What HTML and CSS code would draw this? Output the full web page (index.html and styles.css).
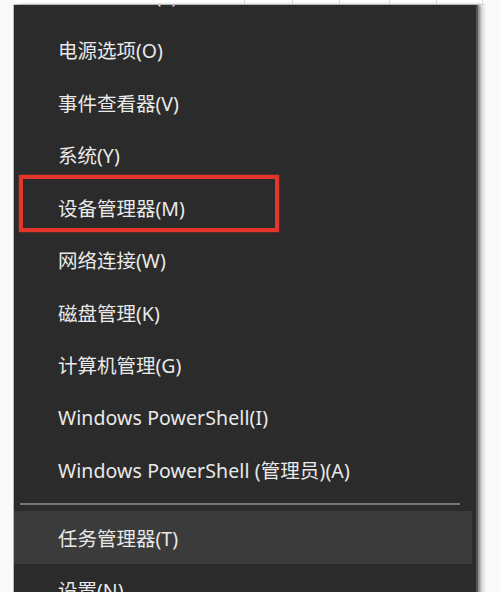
FILE: index.html
```html
<!DOCTYPE html>
<html lang="zh-CN">
<head>
    <meta charset="UTF-8">
    <meta name="viewport" content="width=device-width, initial-scale=1.0">
    <title>Win+X 菜单</title>
    <link rel="stylesheet" href="styles.css">
</head>
<body>

<div class="screen">
    <div class="topbar">
        <div class="cell wide"></div>
        <div class="cell" style="width: 48px"></div>
        <div class="cell" style="width: 47px"></div>
        <div class="cell" style="width: 50px"></div>
        <div class="cell" style="width: 47px"></div>
        <div class="cell" style="width: 46px"></div>
    </div>

    <div class="menu">
        <ul class="menuList">
            <li class="menuItem clipped">应用和功能(F)</li>
            <li class="menuItem">电源选项(O)</li>
            <li class="menuItem">事件查看器(V)</li>
            <li class="menuItem">系统(Y)</li>
            <li class="menuItem marked">设备管理器(M)<span class="redBox"></span></li>
            <li class="menuItem">网络连接(W)</li>
            <li class="menuItem">磁盘管理(K)</li>
            <li class="menuItem">计算机管理(G)</li>
            <li class="menuItem latin">Windows PowerShell(I)</li>
            <li class="menuItem latin">Windows PowerShell (管理员)(A)</li>
            <li class="separator"><hr></li>
            <li class="menuItem active">任务管理器(T)</li>
            <li class="menuItem">设置(N)</li>
        </ul>
    </div>
</div>

</body>
</html>
```

FILE: styles.css
```css
body {
    margin: 0;
    padding: 0;
    background-color: #fff;
    font-family: "Noto Sans", "Noto Sans CJK SC", sans-serif;
}

.screen {
    width: 500px;
    height: 592px;
    overflow: hidden;
    background-color: #fafafa;
}

/* thin strip of the window behind the menu */
.topbar {
    display: flex;
    height: 4px;
    width: 472px;
    margin-left: 13px;
    background-color: #fff;
    border-bottom: 1px solid #cfcfcf;
}

.cell {
    height: 4px;
    border-right: 1px solid #d6d6d6;
    box-sizing: border-box;
}

.cell.wide {
    width: 232px;
}

.menu {
    width: 462px;
    height: 600px;
    margin-left: 13px;
    border-left: 1px solid #b9b9b9;
    background-color: #2b2b2b;
    overflow: hidden;
    box-shadow: 2px 0 0 #555, 4px 0 2px #8a8a8a, 7px 0 4px #c8c8c8;
}

.menuList {
    list-style-type: none;
    margin: -34px 4px 0 0;
    padding: 0;
}

.menuItem {
    position: relative;
    display: flex;
    align-items: center;
    height: 52.5px;
    padding-left: 44px;
    font-size: 19.5px;
    color: #e9e9e9;
    white-space: nowrap;
}

/* the entry above the visible part, only its bottom edge shows */
.menuItem.clipped {
    box-sizing: border-box;
    padding-bottom: 5px;
}

.menuItem.latin {
    letter-spacing: 0.1px;
}

.menuItem.active {
    background-color: #3b3b3b;
}

.separator {
    padding: 7px 12px 6px 6px;
}

.separator hr {
    border: 0;
    height: 2px;
    margin: 0;
    background-color: #767676;
}

/* red annotation round the device manager entry */
.redBox {
    position: absolute;
    left: 5px;
    top: -6px;
    width: 252px;
    height: 49px;
    border: 4px solid #e3352c;
    box-shadow: 0 0 2px rgba(230, 60, 50, 0.6);
}
```
